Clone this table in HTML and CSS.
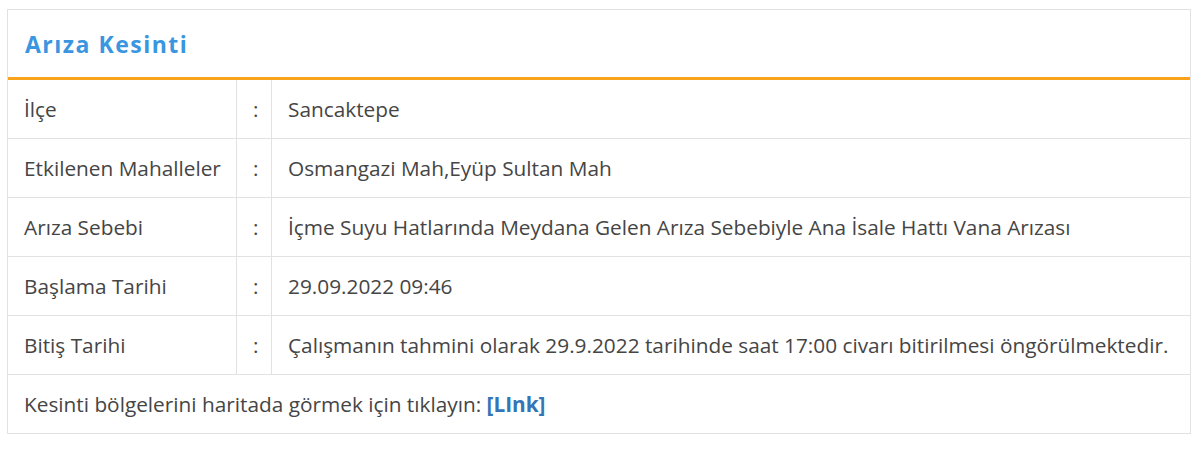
FILE: index.html
```html
<!DOCTYPE html>
<html lang="tr">
<head>
<meta charset="utf-8">
<title>Arıza Kesinti</title>
<link rel="stylesheet" href="styles.css">
</head>
<body>
<div class="panel">
  <div class="panel-head"><h2 class="title">Arıza Kesinti</h2></div>
  <table class="info">
    <tr><td class="label">İlçe</td><td class="sep">:</td><td class="value">Sancaktepe</td></tr>
    <tr><td class="label">Etkilenen Mahalleler</td><td class="sep">:</td><td class="value">Osmangazi Mah,Eyüp Sultan Mah</td></tr>
    <tr><td class="label">Arıza Sebebi</td><td class="sep">:</td><td class="value">İçme Suyu Hatlarında Meydana Gelen Arıza Sebebiyle Ana İsale Hattı Vana Arızası</td></tr>
    <tr><td class="label">Başlama Tarihi</td><td class="sep">:</td><td class="value">29.09.2022 09:46</td></tr>
    <tr><td class="label">Bitiş Tarihi</td><td class="sep">:</td><td class="value">Çalışmanın tahmini olarak 29.9.2022 tarihinde saat 17:00 civarı bitirilmesi öngörülmektedir.</td></tr>
    <tr><td class="foot" colspan="3">Kesinti bölgelerini haritada görmek için tıklayın: <a class="link" href="#">[LInk]</a></td></tr>
  </table>
</div>
</body>
</html>
```
FILE: styles.css
```css
html, body {
  margin: 0;
  padding: 0;
  background: #ffffff;
}
body {
  font-family: "Open Sans", "Liberation Sans", sans-serif;
  color: #454545;
}
.panel {
  margin: 9px 0 0 7px;
  width: 1182px;
  border: 1px solid #e2e2e2;
  background: #fff;
}
.panel-head {
  height: 67px;
  display: flex;
  align-items: center;
  padding-left: 17px;
  border-bottom: 3px solid #f9a21b;
}
.title {
  margin: 0;
  font-size: 23px;
  font-weight: 700;
  letter-spacing: 1.5px;
  color: #3a96e0;
}
.info {
  width: 100%;
  border-collapse: collapse;
  font-size: 20.8px;
}
.info td {
  height: 58px;
  padding: 0 0 0 16px;
  border-bottom: 1px solid #e2e2e2;
  vertical-align: middle;
  white-space: nowrap;
}
.info tr:last-child td {
  border-bottom: 0;
}
.info .label {
  width: 212px;
  border-right: 1px solid #e2e2e2;
}
.info .sep {
  width: 18px;
  border-right: 1px solid #e2e2e2;
}
.link {
  color: #3575b5;
  font-weight: 700;
  text-decoration: none;
}
```
